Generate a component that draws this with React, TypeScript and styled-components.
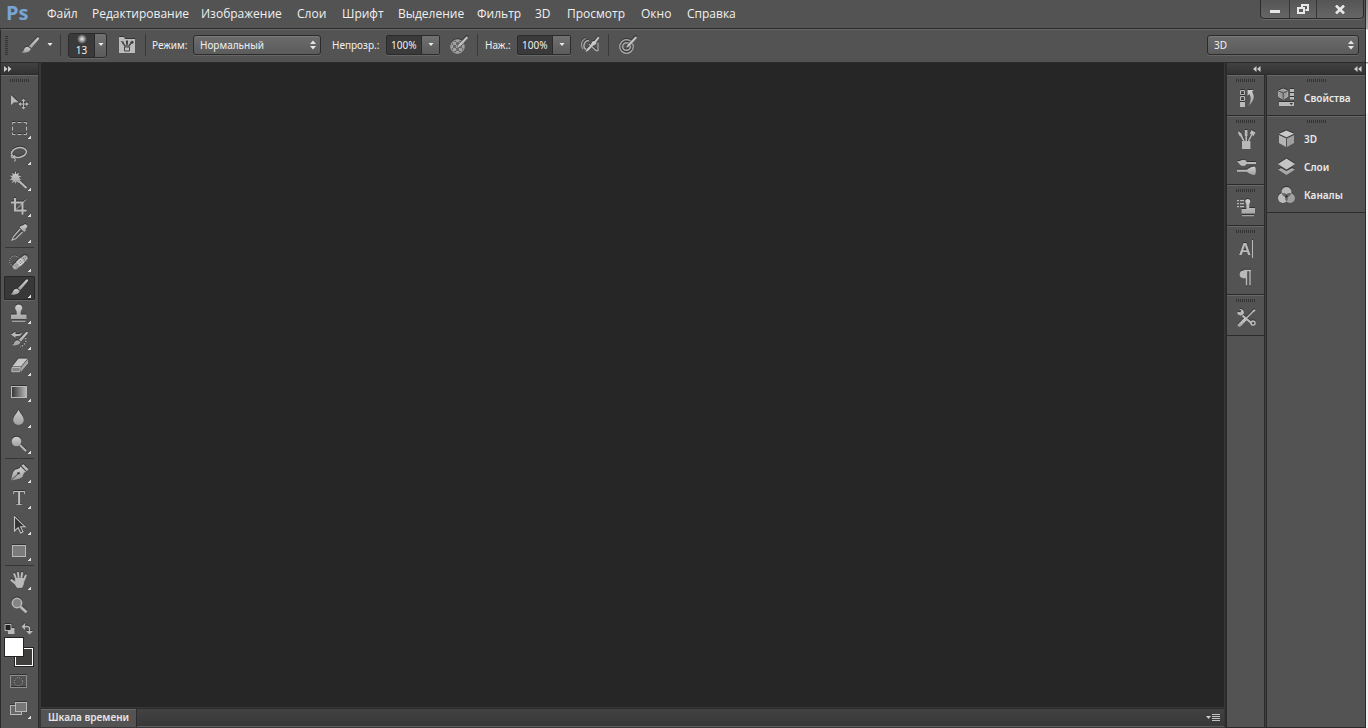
import React from "react";
import styled, { createGlobalStyle, css } from "styled-components";

const ui = '"Noto Sans", "Open Sans", sans-serif';
const light = "#b9b9b9";
const line = "#2b2b2b";
const panel = "#535353";
const ridge = "#676767";

const GlobalStyle = createGlobalStyle`
  * { box-sizing: border-box; }
  html, body { margin: 0; padding: 0; background: #f4f4f4; }
  button, input, select { font: inherit; color: inherit; margin: 0; padding: 0; border: 0; background: none; }
`;

const Desktop = styled.div`
  min-height: 100vh;
  padding-right: 2px;
  display: flex;
  background: linear-gradient(#8f8f8f 0, #b5b5b5 29px, #fff 30px, #fff 62px, #9a9a9a 62px, #9a9a9a 63px, #fff 64px, #fff 113px, #f0f0f0 114px);
  font-family: ${ui};
  color: #f0f0f0;
`;

const AppWindow = styled.div`
  flex: 1;
  min-width: 0;
  display: flex;
  flex-direction: column;
  background: ${panel};
  border-right: 1px solid ${line};
`;

const MenuBar = styled.header`
  height: 29px;
  flex: none;
  display: flex;
  align-items: flex-start;
  border-bottom: 1px solid ${line};
`;

const Logo = styled.span`
  width: 39px;
  padding-left: 6px;
  font: 700 20px/26px "Open Sans", sans-serif;
  color: #78a5d4;
`;

const Menus = styled.nav`
  display: flex;
  flex: 1;
`;

const MenuItem = styled.button<{ $w: number }>`
  width: ${(p) => p.$w}px;
  padding-left: 8px;
  text-align: left;
  white-space: nowrap;
  font-family: "Open Sans", sans-serif;
  font-size: 12px;
  line-height: 28px;
`;

const WindowControls = styled.div`
  display: flex;
  height: 19px;
  margin-right: 1px;
  border: 1px solid ${line};
  border-top: 0;
  border-radius: 0 0 4px 4px;
  background: linear-gradient(#555, #666);
  box-shadow: 0 1px 0 #6a6a6a;
`;

const WindowButton = styled.button<{ $w: number }>`
  width: ${(p) => p.$w}px;
  display: grid;
  place-items: center;
  & + & { border-left: 1px solid #363636; }
`;

const OptionsBar = styled.div`
  height: 33px;
  flex: none;
  display: flex;
  align-items: center;
  padding-bottom: 2px;
  border-top: 1px solid ${ridge};
  border-left: 1px solid ${line};
  font-size: 10px;
`;

const VerticalGrip = styled.span`
  width: 3px;
  height: 19px;
  margin-left: 4px;
  background: repeating-linear-gradient(#333 0 1px, transparent 1px 2px);
`;

const OptionGroup = styled.div<{ $left: number; $right: number; $last?: boolean }>`
  display: flex;
  align-items: center;
  height: 22px;
  padding: 0 ${(p) => p.$right}px 0 ${(p) => p.$left}px;
  ${(p) => !p.$last && css`border-right: 1px solid #393939;`}
`;

const IconButton = styled.button<{ $gap?: number }>`
  display: flex;
  align-items: center;
  gap: 6px;
  margin-left: ${(p) => p.$gap ?? 0}px;
`;

const BrushSize = styled.button`
  display: flex;
  width: 39px;
  height: 25px;
  border: 1px solid ${line};
  border-radius: 3px;
  background: #3a3a3a;
  box-shadow: 0 1px 0 #666;
  overflow: hidden;
`;

const BrushPreview = styled.span`
  flex: 1;
  display: flex;
  flex-direction: column;
  align-items: center;
  font-size: 10px;
  line-height: 12px;
`;

const SoftDot = styled.span`
  width: 10px;
  height: 10px;
  border-radius: 50%;
  background: radial-gradient(circle, #eee 0, #999 35%, transparent 70%);
`;

const DropPart = styled.span<{ $w: number }>`
  width: ${(p) => p.$w}px;
  height: 100%;
  display: grid;
  place-items: center;
  border-left: 1px solid ${line};
  background: linear-gradient(#717171, #5b5b5b);
`;

const Field = styled.label<{ $label: number; $gap?: number }>`
  display: flex;
  align-items: center;
  margin-left: ${(p) => p.$gap ?? 0}px;
  & > span:first-child { width: ${(p) => p.$label}px; white-space: nowrap; }
`;

const SelectBox = styled.span<{ $w: number }>`
  position: relative;
  display: block;
  width: ${(p) => p.$w}px;
  height: 20px;
  border: 1px solid ${line};
  border-radius: 3px;
  background: linear-gradient(#6c6c6c, #5b5b5b);
  box-shadow: 0 1px 0 #666, inset 0 1px 0 #7a7a7a;
  & > svg { position: absolute; right: 4px; top: 4px; pointer-events: none; }
`;

const Select = styled.select`
  display: block;
  appearance: none;
  width: 100%;
  height: 18px;
  padding-left: 6px;
  font-size: 10px;
  line-height: 18px;
`;

const ValueBox = styled.span`
  display: flex;
  width: 54px;
  height: 20px;
  border: 1px solid ${line};
  border-radius: 2px;
  background: #3a3a3a;
  box-shadow: 0 1px 0 #666;
`;

const ValueInput = styled.input`
  width: 34px;
  height: 18px;
  padding-left: 4px;
  font-size: 10px;
`;

const Workspace = styled.div`
  margin: 0 6px 0 auto;
`;

const Body = styled.div`
  flex: 1;
  display: flex;
  background: #383838;
  border-left: 1px solid ${line};
  border-top: 1px solid ${line};
`;

const Strip = styled.div`
  height: 12px;
  flex: none;
  display: flex;
  align-items: center;
  background: linear-gradient(#414141, #333);
  border-bottom: 1px solid ${line};
`;

const CollapseButton = styled.button<{ $w: number; $left?: boolean }>`
  width: ${(p) => p.$w}px;
  display: flex;
  padding: 0 3px;
  justify-content: ${(p) => (p.$left ? "flex-start" : "flex-end")};
`;

const ToolPanel = styled.aside`
  width: 38px;
  flex: none;
  display: flex;
  flex-direction: column;
  background: ${panel};
  border-right: 1px solid ${line};
`;

const Grip = styled.span`
  display: block;
  width: 19px;
  height: 3px;
  background: repeating-linear-gradient(90deg, #333 0 1px, transparent 1px 2px);
`;

const ToolHead = styled.div`
  display: flex;
  padding: 3px 0 8px 9px;
  border-top: 1px solid ${ridge};
`;

const ToolList = styled.div`
  display: flex;
  flex-direction: column;
  padding-left: 3px;
`;

const ToolButton = styled.button<{ $active?: boolean }>`
  position: relative;
  display: grid;
  place-items: center;
  width: 31px;
  height: 24px;
  margin: 1px 0;
  border-radius: 2px;
  ${(p) =>
    p.$active &&
    css`
      background: #383838;
      box-shadow: inset 0 0 0 1px #272727, 0 1px 0 #666;
    `}
`;

const Corner = styled.i`
  position: absolute;
  right: 4px;
  bottom: 2px;
  width: 3px;
  height: 3px;
  background: linear-gradient(135deg, transparent 45%, #ddd 45%);
`;

const Divider = styled.hr`
  width: 29px;
  height: 1px;
  margin: 1px 0 1px 1px;
  border: 0;
  background: #363636;
`;

const SwatchTools = styled.div`
  display: flex;
  justify-content: space-between;
  width: 29px;
  margin-top: 1px;
  height: 17px;
`;

const Swatches = styled.div`
  display: grid;
  grid-template: repeat(3, 10px) / repeat(3, 10px);
`;

const Swatch = styled.button<{ $front?: boolean }>`
  border: 1px solid #222;
  grid-area: ${(p) => (p.$front ? "1 / 1 / 3 / 3" : "2 / 2 / 4 / 4")};
  z-index: ${(p) => (p.$front ? 1 : 0)};
  background: ${(p) => (p.$front ? "#fff" : "#403d3d")};
  box-shadow: ${(p) => (p.$front ? "none" : "inset 0 0 0 1px #fff")};
`;

const ModeTools = styled.div`
  padding-top: 2px;
  display: flex;
  flex-direction: column;
  gap: 1px;
`;

const Main = styled.main`
  flex: 1;
  min-width: 0;
  display: flex;
  flex-direction: column;
  margin: 0 1px 0 2px;
`;

const Canvas = styled.div`
  flex: 1;
  background: #262626;
`;

const Timeline = styled.div`
  display: flex;
  align-items: center;
  height: 18px;
  margin: 1px 0 2px;
  border-top: 1px solid ${line};
  background: linear-gradient(#424242, #383838);
  box-shadow: 0 1px 0 #5c5c5c;
`;

const TimelineTab = styled.button`
  height: 18px;
  padding: 0 7px;
  background: ${panel};
  border-right: 1px solid ${line};
  box-shadow: inset 0 1px 0 ${ridge};
  font-size: 10px;
  font-weight: 600;
  line-height: 17px;
  white-space: nowrap;
  color: #e6e6e6;
`;

const TimelineMenu = styled.button`
  margin: 0 4px 0 auto;
  display: flex;
`;

const Dock = styled.aside`
  flex: none;
  width: 140px;
  display: flex;
  flex-direction: column;
  border-left: 2px solid ${line};
  border-bottom: 1px solid ${line};
`;

const DockColumns = styled.div`
  flex: 1;
  display: flex;
  background: #3f3f3f;
  gap: 1px;
`;

const DockColumn = styled.div<{ $wide?: boolean }>`
  background: ${panel};
  ${(p) =>
    p.$wide
      ? css`flex: 1; border-left: 1px solid ${line};`
      : css`width: 38px; border-right: 1px solid ${line};`}
`;

const DockGroup = styled.section`
  padding: 3px 0;
  border-top: 1px solid ${ridge};
  border-bottom: 1px solid ${line};
  & > ${Grip} { margin: 0 auto 2px; }
`;

const DockButton = styled.button`
  width: 100%;
  height: 28px;
  padding-left: 7px;
  display: flex;
  align-items: center;
  gap: 7px;
  font-size: 10px;
  font-weight: 600;
  color: #e9e9e9;
`;

const Glyph = styled.svg`
  display: block;
  flex: none;
  overflow: visible;
  filter: drop-shadow(0 -1px 0 rgba(30, 30, 30, 0.6));
`;

const Defs = styled.svg`
  position: absolute;
  width: 0;
  height: 0;
`;

function Icon({ w = 23, h = 22, children }: { w?: number; h?: number; children: React.ReactNode }) {
  return (
    <Glyph width={w} height={h} viewBox={`0 0 ${w} ${h}`} fill="none" aria-hidden="true">
      {children}
    </Glyph>
  );
}

const brushShape = (
  <>
    <path d="M19.6 2.4c.7.5.5 1.3 0 2L12.4 13l-2.6-1.8 8-8.3c.6-.6 1.2-.8 1.8-.5z" fill="url(#metal)" />
    <path d="M9 11.8l2.7 2c-.3 3.2-4.200 4.600-9.500 3.400 2.300-.4 2.200-1.600 3-3.200.8-1.700 2.400-2.500 3.800-2.200z" fill="url(#metal)" />
  </>
);

const cubeFaces = (
  <>
    <path d="M12.500 2.500l7.500 3.200-7.500 3.600L5 5.700z" fill="#c9c9c9" />
    <path d="M5 7l7 3.300v8.700l-7-4z" fill="#b5b5b5" />
    <path d="M20 7l-7 3.300v8.700l7-4z" fill="#9f9f9f" />
  </>
);

const icons: Record<string, React.ReactNode> = {
  move: (
    <>
      <path d="M3 3v10l3-2.800h4.500z" fill={light} />
      <path d="M15.500 7.500v9M11 12h9" stroke={light} />
      <path d="M13.500 9l2-2.500 2 2.500zM13.500 15l2 2.500 2-2.500zM13 10l-2.500 2 2.500 2zM18 10l2.500 2-2.500 2z" fill={light} />
    </>
  ),
  marquee: (
    <path d="M4.500 6.500v-2h3M9.500 4.500h4M15.500 4.500h3v2M18.500 8.500v4M18.500 14.500v2h-3M13.500 16.500h-4M7.500 16.500h-3v-2M4.500 12.500v-4" stroke={light} />
  ),
  lasso: (
    <>
      <ellipse cx="11" cy="8.500" rx="7.500" ry="4.800" transform="rotate(-10 11 8.500)" stroke={light} strokeWidth="1.500" />
      <path d="M3.500 11c-.8 2 .8 3 2.200 2.500s1.800-1.800.3-2.300M5.500 13.500c1.800.8 2.300 2.200 1 4" stroke={light} strokeWidth="1.200" />
    </>
  ),
  wand: (
    <>
      <path d="M7.500 1l1 3.300L11 2.500l-.7 3L13.500 6l-2.500 1.800 2.500 2-3.200.2.600 3-2.600-1.500L7.500 14l-1.200-2.500L4 13l.5-3-3-.3L4 7.800 1.700 5.500l3 .2L4 2.700l2.500 1.500z" fill="url(#metal)" />
      <path d="M10.500 10.500l8 7.500" stroke={light} strokeWidth="2.200" />
    </>
  ),
  crop: (
    <>
      <path d="M7 2v12.500h11.500M3 6.500h11.500v12" stroke={light} strokeWidth="2" />
      <path d="M8.500 13L18 3.500" stroke={light} />
    </>
  ),
  eyedropper: (
    <>
      <path d="M15 3.500c1.200-1.700 3.200-1.700 4 0 .7 1.200-.2 2.500-1.600 3.500l.6 1.500-1.800 1.500-4.700-4.500 1.500-1.700z" fill="url(#metal)" />
      <path d="M12 7L5.500 14.500 4 18l3.500-1.300L14.500 10" stroke={light} strokeWidth="1.200" />
    </>
  ),
  heal: (
    <>
      <circle cx="6.500" cy="10" r="5" stroke={light} strokeDasharray="1 1.200" />
      <g transform="rotate(-42 12.500 11)">
        <rect x="2.500" y="8" width="19" height="6" rx="3" fill="#b0b0b0" stroke="#4a4a4a" strokeWidth=".6" />
        <rect x="9.500" y="8" width="5.500" height="6" fill="#d0d0d0" />
        <path d="M5.500 10h1M5.500 12h1M7.500 11h1M16.500 10h1M16.500 12h1M18.500 11h1M11 10h1M13 10h1M11 12h1M13 12h1" stroke="#666" />
      </g>
    </>
  ),
  brush: brushShape,
  stamp: (
    <path d="M10.700 1.500c2.200 0 3.600 1.600 3.600 3.400 0 1.500-1.600 2.600-1.600 4v2.600h5.800V16H3v-4.500h5.700V8.900c0-1.400-1.600-2.500-1.600-4 0-1.800 1.400-3.400 3.600-3.400zM4 17.500h13.500V19H4z" fill="url(#metal)" />
  ),
  history: (
    <>
      <path d="M3 5.500l4.500-3V5H10c2 0 3-.6 4-1.500-.4 2.400-2 3.500-4 3.500H7.500v1.800z" fill={light} />
      <path d="M19.500 3c.6.500.2 1.300-.2 1.800L13 12.500l-2.200-1.700L18 3.300c.5-.5 1-.6 1.500-.3zM10 11.300l2.300 1.800c-.5 2.700-3.800 3.900-8.800 3 2-.5 2-1.300 2.800-2.700.8-1.500 2.200-2.300 3.700-2.100z" fill="url(#metal)" />
      <path d="M17.500 9c1.500 4-1 7.500-5.500 8.500" stroke={light} strokeDasharray="1.300 1.500" strokeWidth="1.300" />
    </>
  ),
  eraser: (
    <>
      <path d="M10.500 3.500h9.200L13 11.500H4.200z" fill="#c6c6c6" />
      <path d="M4 12.500h8.500l-.8 4.200H3.800z" fill="#868686" stroke={light} />
      <path d="M20 4v4.300l-7.200 8.700.6-5z" fill="#a8a8a8" />
    </>
  ),
  gradient: <rect x="3.500" y="5.500" width="15" height="11" fill="url(#fade)" stroke={light} />,
  blur: <path d="M10.500 2.500c1 3.600 5.300 6.500 5.300 10.400A5.300 5.300 0 0 1 10.500 18 5.300 5.300 0 0 1 5.200 12.900C5.200 9 9.500 6.100 10.500 2.500z" fill="url(#metal)" />,
  dodge: (
    <>
      <circle cx="8.500" cy="8.500" r="4.800" fill="url(#metal)" />
      <path d="M12 12l6 6" stroke={light} strokeWidth="2" />
    </>
  ),
  pen: (
    <>
      <path d="M12.500 4.500l5.500 5.300-2 1-1.500 4C12.500 17 7.500 17.500 3 18.500 4 14.500 4.300 10 7 7.700l4.500-1.500z" fill="url(#metal)" />
      <path d="M15.200 2l5.300 5.200-1.800 1.800-5.300-5.200z" fill={light} />
      <path d="M3.500 18l6.300-6" stroke="#444" />
      <circle cx="10.500" cy="11.300" r="1.300" fill="#444" />
    </>
  ),
  type: <text x="11" y="17" textAnchor="middle" fontFamily='"Liberation Serif", serif' fontSize="20" fill="#c0c0c0">T</text>,
  path: <path d="M6.500 2.700V17l3.700-3.300 2.500 5.300 2.300-1.200-2.400-5.100H17z" fill="#333" stroke="#c4c4c4" strokeWidth="1.100" />,
  shape: <rect x="4.500" y="5.500" width="13" height="11" fill="#7b7b7b" stroke={light} />,
  hand: (
    <g stroke="#b9b9b9" strokeLinecap="round">
      <path d="M8.300 10L6.300 5M10.700 9.500L10 3.700M13.300 9.500l.8-5.500M15.800 11l2-4.700" strokeWidth="2" />
      <path d="M8 15l-4.500-3.800" strokeWidth="2.200" />
      <path d="M8 9.500h8l-.5 5-1.500 3.800H9L6.800 14z" fill={light} strokeWidth="1" strokeLinejoin="round" />
    </g>
  ),
  zoom: (
    <>
      <circle cx="9" cy="8" r="4.700" fill="#858585" stroke={light} strokeWidth="1.500" />
      <path d="M12.500 11.800l6 5.500" stroke={light} strokeWidth="2.800" />
    </>
  ),
  mask: (
    <>
      <rect x="2.500" y="4.500" width="16" height="12" stroke="#8f8f8f" />
      <circle cx="10.500" cy="10.500" r="4" stroke="#a5a5a5" strokeDasharray="1 1.100" />
    </>
  ),
  screen: (
    <>
      <rect x="2.500" y="7.500" width="11" height="9" fill="#686868" stroke={light} />
      <rect x="7.500" y="4.500" width="11" height="9" fill="#777" stroke={light} />
    </>
  ),
  dockHistory: (
    <>
      <path d="M6.500 3.500h4v4h-4zM6.500 9.500h4v4h-4z" stroke={light} />
      <path d="M6 15h5v5H6z" fill={light} />
      <path d="M13.500 3h6.200l-1.600 1.800c2.800 4.200 2.400 9.200-3.900 14.200 2.200-4 3.300-8 1.300-12l-2 1.800z" fill="url(#metal)" />
    </>
  ),
  brushCup: (
    <>
      <path d="M8 13h8.500v8H8z" fill={light} />
      <path d="M10 13L6.500 6.500M12.200 13V5M14.500 13l3.500-7" stroke={light} strokeWidth="1.600" />
      <path d="M4.200 3c-.2 3.500 1 5.500 4.300 5.800C8.500 6 6.500 4.300 4.200 3zM10.800 2h2.700v6h-2.700zM15.700 5.500L17.500 2l4 2.500-2 3.500z" fill={light} />
    </>
  ),
  brushPresets: (
    <>
      <path d="M12 7h10" stroke={light} strokeWidth="2" />
      <path d="M3 5c3 .4 4.600-1.600 7-1.300 2.500.3 2.700 1.800 2.700 3.300S11.500 10 9 10c-3 0-4-3-6-5z" fill={light} />
      <path d="M3 14.700h10" stroke={light} strokeWidth="2" />
      <path d="M12 14.700c2.500-2.200 5-4.200 9-4.200 1.200 2.700 1.200 6 0 8.500-4 0-6.500-2-9-4.300z" fill="url(#metal)" />
    </>
  ),
  cloneSource: (
    <>
      <path d="M3 3.500h2M6 3.500h4M3 6.500h2M6 6.500h4M3 9.500h2M6 9.500h4" stroke={light} strokeWidth="1.300" />
      <path d="M13.800 2c1.600 0 2.500 1.100 2.500 2.400 0 1.200-1 1.800-1 3V11H21v5.500H7.500V12h4.800V7.400c0-1.200-1-1.800-1-3 0-1.300.9-2.400 2.500-2.400zM8 18h12v1.200H8z" fill="url(#metal)" />
    </>
  ),
  character: (
    <>
      <text x="11" y="17" textAnchor="middle" fontFamily='"Liberation Sans", sans-serif' fontSize="17" fill={light}>A</text>
      <path d="M18.500 2v18" stroke={light} />
    </>
  ),
  paragraph: (
    <>
      <path d="M12 4.500H9.500a3.800 3.800 0 0 0 0 7.700H12z" fill={light} />
      <path d="M12.500 4v15M16 4v15M10 4.500h7" stroke={light} strokeWidth="1.400" />
    </>
  ),
  toolPresets: (
    <>
      <path d="M8.500 8.500l9.500 8" stroke={light} strokeWidth="2.200" />
      <path d="M3.500 4.800l3 .5.700-1.800-2-1.500c2.500-.5 5 .8 4.800 3.800-.2 2.500-4.500 3.700-6 1.500-.6-.8-.8-1.500-.5-2.500z" fill={light} />
      <circle cx="19" cy="16" r="2" stroke={light} strokeWidth="1.500" />
      <path d="M20.500 3L12.500 11" stroke={light} strokeWidth="1.500" />
      <path d="M18.500 3.500l2.500-1.200.5.700-1.500 2.200z" fill={light} />
      <path d="M10.500 10.700l2.300 2.300-6.300 6.500c-1.800 1.200-3.500-.8-2.500-2.300z" fill="url(#metal)" />
    </>
  ),
  properties: (
    <>
      <path d="M9.200 2l4.500 1.900v5.600L9.200 12 4.700 9.500V3.900z" fill="#999" stroke={light} />
      <path d="M4.700 4l4.500 2 4.500-2M9.200 6v6" stroke="#4b4b4b" />
      <path d="M16 2h4v3h-4zM16 6h4v3h-4zM16 10h4v2.500h-4zM5 15h15v4H5z" fill={light} />
      <path d="M15.500 16h3.500l-1.700 2z" fill="#333" />
    </>
  ),
  cube: cubeFaces,
  layers: (
    <>
      <path d="M4 13.500l3-1.500 5.500 3 5.500-3 3 1.500-8.500 5.500z" fill="#a9a9a9" />
      <path d="M12.500 2.500L21 8l-8.500 5.500L4 8z" fill="#c4c4c4" />
    </>
  ),
  channels: (
    <>
      <circle cx="12.500" cy="8" r="5" fill="#b9b9b9" />
      <circle cx="9" cy="14" r="5" fill="#bdbdbd" />
      <circle cx="16" cy="14" r="5" fill="#a0a0a0" />
      <path d="M7.700 9.200c2-.5 3.700 0 4.800 1.200 1.100-1.200 2.800-1.700 4.800-1.200-.6 2.200-2.300 3.600-4.800 3.800-2.500-.2-4.200-1.600-4.800-3.800z" fill="#6a6a6a" />
      <path d="M12.500 10.500a5 5 0 0 0 0 7 5 5 0 0 0 0-7z" fill="#6a6a6a" />
      <path d="M12.500 10.500l1.500 2.300-1.500 1-1.500-1z" fill="#333" />
    </>
  ),
};

const pressureBrush = (
  <path d="M17.600 1l1.900 1.800-7.800 8.400-2.500 1.500-1-.9 1.300-2.500z" fill="#c4c4c4" stroke="#4b4b4b" strokeWidth=".7" />
);

const Down = () => (
  <svg width="6" height="4" viewBox="0 0 6 4" aria-hidden="true">
    <path d="M.5 0h5L3 3z" fill="#eee" />
  </svg>
);

const UpDown = () => (
  <svg width="6" height="10" viewBox="0 0 6 10" aria-hidden="true">
    <path d="M0 4l3-3.500L6 4zM0 6h6L3 9.500z" fill="#e6e6e6" />
  </svg>
);

const Chevrons = ({ right }: { right?: boolean }) => (
  <svg width="8" height="6" viewBox="0 0 8 6" aria-hidden="true">
    <path d={right ? "M0 0l3.500 3L0 6zM4 0l3.500 3L4 6z" : "M3.500 0L0 3l3.500 3zM7.500 0L4 3l3.500 3z"} fill="#ccc" />
  </svg>
);

const menus: [string, number][] = [
  ["Файл", 45],
  ["Редактирование", 109],
  ["Изображение", 96],
  ["Слои", 45],
  ["Шрифт", 56],
  ["Выделение", 79],
  ["Фильтр", 58],
  ["3D", 32],
  ["Просмотр", 74],
  ["Окно", 46],
  ["Справка", 62],
];

const toolGroups: [string, string][][] = [
  [
    ["move", "Перемещение"],
    ["marquee", "Прямоугольная область"],
    ["lasso", "Лассо"],
    ["wand", "Волшебная палочка"],
    ["crop", "Рамка"],
    ["eyedropper", "Пипетка"],
  ],
  [
    ["heal", "Точечная восстанавливающая кисть"],
    ["brush", "Кисть"],
    ["stamp", "Штамп"],
    ["history", "Архивная кисть"],
    ["eraser", "Ластик"],
    ["gradient", "Градиент"],
    ["blur", "Размытие"],
    ["dodge", "Осветлитель"],
  ],
  [
    ["pen", "Перо"],
    ["type", "Текст"],
    ["path", "Выделение контура"],
    ["shape", "Прямоугольник"],
  ],
  [
    ["hand", "Рука"],
    ["zoom", "Масштаб"],
  ],
];

const iconDock: [string, string][][] = [
  [["dockHistory", "История"]],
  [["brushCup", "Кисть"], ["brushPresets", "Наборы кистей"]],
  [["cloneSource", "Источник клонов"]],
  [["character", "Символ"], ["paragraph", "Абзац"]],
  [["toolPresets", "Наборы параметров"]],
];

const labelDock: [string, string][][] = [
  [["properties", "Свойства"]],
  [["cube", "3D"], ["layers", "Слои"], ["channels", "Каналы"]],
];

function PercentField({ label, width, gap }: { label: string; width: number; gap?: number }) {
  return (
    <Field $label={width} $gap={gap}>
      <span>{label}</span>
      <ValueBox>
        <ValueInput defaultValue="100%" />
        <DropPart $w={18}>
          <Down />
        </DropPart>
      </ValueBox>
    </Field>
  );
}

export default function App() {
  return (
    <Desktop>
      <GlobalStyle />
      <Defs aria-hidden="true">
        <defs>
          <linearGradient id="metal" x1="0" y1="0" x2="0" y2="1">
            <stop offset="0" stopColor="#cfcfcf" />
            <stop offset="1" stopColor="#a0a0a0" />
          </linearGradient>
          <linearGradient id="fade">
            <stop offset="0" stopColor="#333" />
            <stop offset="1" stopColor="#bbb" />
          </linearGradient>
        </defs>
      </Defs>
      <AppWindow>
        <MenuBar>
          <Logo>Ps</Logo>
          <Menus>
            {menus.map(([name, w]) => (
              <MenuItem key={name} $w={w}>{name}</MenuItem>
            ))}
          </Menus>
          <WindowControls>
            <WindowButton $w={28} aria-label="Свернуть">
              <svg width="10" height="9" viewBox="0 0 10 9"><path d="M0 5h10v3H0z" fill="#e8e8e8" /></svg>
            </WindowButton>
            <WindowButton $w={27} aria-label="Восстановить">
              <svg width="12" height="10" viewBox="0 0 12 10" fill="none">
                <path d="M5 3V1h6v5H8.500M1 4h6v5H1z" stroke="#e8e8e8" strokeWidth="2" />
              </svg>
            </WindowButton>
            <WindowButton $w={47} aria-label="Закрыть">
              <svg width="10" height="9" viewBox="0 0 10 9"><path d="M1 .5l8 8M9 .5l-8 8" stroke="#e8e8e8" strokeWidth="2.600" /></svg>
            </WindowButton>
          </WindowControls>
        </MenuBar>

        <OptionsBar>
          <VerticalGrip />
          <OptionGroup $left={11} $right={7}>
            <IconButton aria-label="Кисть">
              <Icon w={22} h={20}>{brushShape}</Icon>
              <Down />
            </IconButton>
          </OptionGroup>
          <OptionGroup $left={7} $right={9}>
            <BrushSize aria-label="Размер кисти">
              <BrushPreview>
                <SoftDot />
                13
              </BrushPreview>
              <DropPart $w={12}>
                <Down />
              </DropPart>
            </BrushSize>
            <IconButton $gap={11} aria-label="Панель кистей">
              <Icon w={18} h={18}>
                <path d="M1 1h5l1 2h10v14H1z" fill="#bcbcbc" />
                <path d="M6.500 11h5v4h-5z" stroke="#444" />
                <path d="M7.500 10.500L4.500 6.500M9 10.500V7M10.500 10.500l3-4" stroke="#444" strokeWidth="1.400" />
                <path d="M2.500 5l3 .5.500 3zM8 4.500h2V8H8zM12 6l2.500-1.500 1.500 2-2 1.500z" fill="#444" />
              </Icon>
            </IconButton>
          </OptionGroup>
          <OptionGroup $left={6} $right={8}>
            <Field $label={41}>
              <span>Режим:</span>
              <SelectBox $w={128}>
                <Select defaultValue="Нормальный">
                  <option>Нормальный</option>
                </Select>
                <UpDown />
              </SelectBox>
            </Field>
            <PercentField label="Непрозр.:" width={54} gap={11} />
            <IconButton $gap={9} aria-label="Нажим управляет непрозрачностью">
              <Icon w={20} h={20}>
                <circle cx="8.500" cy="11.500" r="6.800" fill="#686868" stroke="#aaa" />
                <path d="M4 7h3v3H4zM10 7h3v3h-3zM7 10h3v3H7zM2 10h2v3H2zM13 10h2v3h-2zM4 13h3v3H4zM10 13h3v3h-3zM7 5h3v2H7zM7 16h3v2H7z" fill="#a0a0a0" />
                {pressureBrush}
              </Icon>
            </IconButton>
          </OptionGroup>
          <OptionGroup $left={7} $right={8}>
            <PercentField label="Наж.:" width={32} />
            <IconButton $gap={9} aria-label="Аэрограф">
              <Icon w={20} h={20}>
                <path d="M9 5.500a5 5 0 0 0-3 9" stroke="#aaa" strokeWidth="1.600" />
                <path d="M6 3.500c-3.300 1-4.500 3.500-4.500 6 0 2 .6 3.500 1.500 4.500" stroke="#999" strokeWidth="1.300" />
                <path d="M9 9l7 6.500h2V7.500" stroke="#aaa" strokeWidth="1.300" />
                <path d="M18.200 1.500l1.300 1.200-3 4-.5 2.300-3.500 2-4 4.500-3 1.500 1.200-3 4-4 1.500-3.500 2.500-.8z" fill="#c9c9c9" />
              </Icon>
            </IconButton>
          </OptionGroup>
          <OptionGroup $left={9} $right={0} $last>
            <IconButton aria-label="Нажим управляет размером">
              <Icon w={20} h={20}>
                <circle cx="8.500" cy="11.500" r="6.800" stroke="#aaa" strokeWidth="1.300" />
                <circle cx="8.500" cy="11.500" r="3.800" stroke="#aaa" strokeWidth="1.500" />
                {pressureBrush}
              </Icon>
            </IconButton>
          </OptionGroup>
          <Workspace>
            <SelectBox $w={152}>
              <Select aria-label="Рабочая среда" defaultValue="3D">
                <option>3D</option>
              </Select>
              <UpDown />
            </SelectBox>
          </Workspace>
        </OptionsBar>

        <Body>
          <ToolPanel>
            <Strip>
              <CollapseButton $w={37} $left aria-label="Развернуть">
                <Chevrons right />
              </CollapseButton>
            </Strip>
            <ToolHead>
              <Grip />
            </ToolHead>
            <ToolList>
              {toolGroups.map((group, i) => (
                <React.Fragment key={i}>
                  {i > 0 && <Divider />}
                  {group.map(([id, name]) => (
                    <ToolButton key={id} $active={id === "brush"} aria-label={name}>
                      <Icon>{icons[id]}</Icon>
                      {id !== "move" && id !== "zoom" && <Corner />}
                    </ToolButton>
                  ))}
                </React.Fragment>
              ))}
              <SwatchTools>
                <IconButton aria-label="Цвета по умолчанию">
                  <Icon w={11} h={12}>
                    <path d="M4 5h6.500v6H4z" fill={light} />
                    <path d="M1 1.500h6v6H1z" fill="#222" stroke={light} />
                  </Icon>
                </IconButton>
                <IconButton aria-label="Поменять цвета">
                  <Icon w={12} h={12}>
                    <path d="M3 3.500h3.500q2 0 2 2V9" stroke={light} strokeWidth="1.300" />
                    <path d="M4 0v7L.5 3.500zM5 8h7l-3.500 3.500z" fill={light} />
                  </Icon>
                </IconButton>
              </SwatchTools>
              <Swatches>
                <Swatch $front aria-label="Основной цвет" />
                <Swatch aria-label="Фоновый цвет" />
              </Swatches>
              <ModeTools>
                <ToolButton aria-label="Быстрая маска">
                  <Icon>{icons.mask}</Icon>
                </ToolButton>
                <ToolButton aria-label="Режим экрана">
                  <Icon>{icons.screen}</Icon>
                  <Corner />
                </ToolButton>
              </ModeTools>
            </ToolList>
          </ToolPanel>

          <Main>
            <Canvas />
            <Timeline>
              <TimelineTab>Шкала времени</TimelineTab>
              <TimelineMenu aria-label="Меню панели">
                <svg width="14" height="9" viewBox="0 0 14 9">
                  <path d="M0 3h5L2.500 6z" fill="#ccc" />
                  <path d="M6 1.500h8M6 3.500h8M6 5.500h8M6 7.500h8" stroke="#c4c4c4" />
                </svg>
              </TimelineMenu>
            </Timeline>
          </Main>

          <Dock>
            <Strip>
              <CollapseButton $w={37} aria-label="Развернуть панели">
                <Chevrons />
              </CollapseButton>
              <CollapseButton $w={101} aria-label="Свернуть панели">
                <Chevrons />
              </CollapseButton>
            </Strip>
            <DockColumns>
              <DockColumn>
                {iconDock.map((group, i) => (
                  <DockGroup key={i}>
                    <Grip />
                    {group.map(([id, name]) => (
                      <DockButton key={id} aria-label={name}>
                        <Icon>{icons[id]}</Icon>
                      </DockButton>
                    ))}
                  </DockGroup>
                ))}
              </DockColumn>
              <DockColumn $wide>
                {labelDock.map((group, i) => (
                  <DockGroup key={i}>
                    <Grip />
                    {group.map(([id, name]) => (
                      <DockButton key={id}>
                        <Icon>{icons[id]}</Icon>
                        {name}
                      </DockButton>
                    ))}
                  </DockGroup>
                ))}
              </DockColumn>
            </DockColumns>
          </Dock>
        </Body>
      </AppWindow>
    </Desktop>
  );
}
